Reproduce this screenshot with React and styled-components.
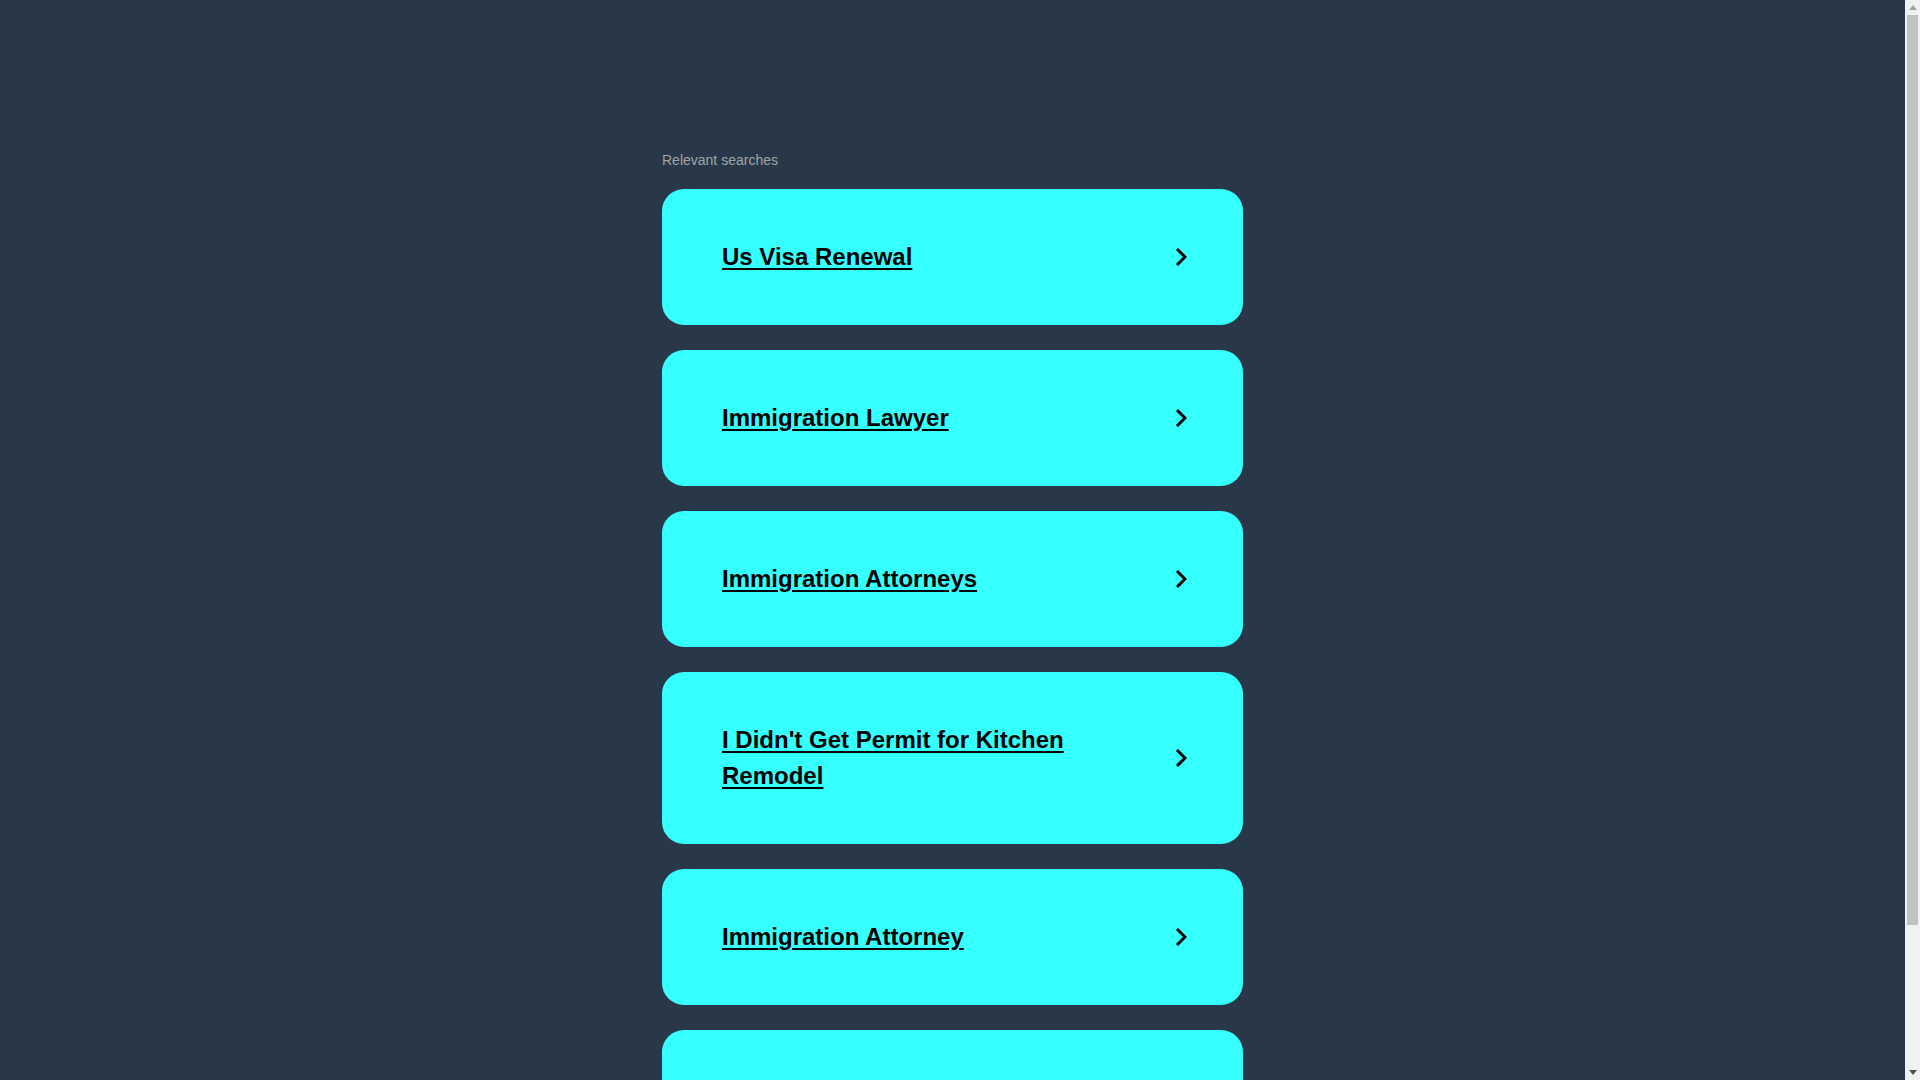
import React from 'react'
import styled, { createGlobalStyle } from 'styled-components'

const GlobalStyle = createGlobalStyle`
    html, body {
        margin: 0;
        padding: 0;
        background: #293848;
    }
    body {
        font-family: "Liberation Sans", Arial, sans-serif;
    }
`;

const Page = styled.div`
    min-height: 100vh;
    background: #293848;
    display: flex;
    justify-content: center;
    padding: 150px 15px 60px 0;
    box-sizing: border-box;
`;

const Column = styled.div`
    width: 581px;
    display: flex;
    flex-direction: column;
`;

const Label = styled.div`
    color: #a0a4a8;
    font-size: 14px;
    line-height: 20px;
    margin-bottom: 19px;
`;

const List = styled.div`
    display: flex;
    flex-direction: column;
    gap: 25px;
`;

const Card = styled.a`
    display: flex;
    align-items: center;
    background: #36ffff;
    border-radius: 22px;
    padding: 50px 56px 50px 60px;
    text-decoration: none;
    cursor: pointer;
`;

const Title = styled.span`
    flex: 1;
    color: #000;
    font-size: 24px;
    font-weight: 700;
    line-height: 36px;
    text-decoration: underline;
    text-underline-offset: 3px;
    margin-right: 40px;
`;

/* stand-in for the browser scrollbar seen in the screenshot */
const ScrollTrack = styled.div`
    position: fixed;
    top: 0;
    right: 0;
    width: 15px;
    height: 100vh;
    background: #f1f1f1;
    display: flex;
    flex-direction: column;
    align-items: center;
    justify-content: space-between;
`;

const ScrollArrow = styled.div`
    width: 15px;
    height: 15px;
    display: flex;
    align-items: center;
    justify-content: center;
`;

const ScrollThumb = styled.div`
    width: 11px;
    flex: 0 0 910px;
    margin-top: 0;
    margin-bottom: auto;
    background: #c1c1c1;
`;

const Triangle = ({ up }) => (
    <svg width="8" height="5" viewBox="0 0 8 5">
        <polygon points={up ? '0,5 8,5 4,0' : '0,0 8,0 4,5'} fill={up ? '#a3a3a3' : '#505050'} />
    </svg>
);

const Chevron = () => (
    <svg width="12" height="20" viewBox="0 0 12 20" fill="none">
        <polyline points="2,2 10,10 2,18" stroke="#000" strokeWidth="3" strokeLinejoin="miter" />
    </svg>
);

const searches = [
    'Us Visa Renewal',
    'Immigration Lawyer',
    'Immigration Attorneys',
    "I Didn't Get Permit for Kitchen Remodel",
    'Immigration Attorney',
    'Immigration Visa',
];

export default function App() {
    return (
        <>
            <GlobalStyle />
            <Page>
                <Column>
                    <Label>Relevant searches</Label>
                    <List>
                        {searches.map((s) => (
                            <Card key={s}>
                                <Title>{s}</Title>
                                <Chevron />
                            </Card>
                        ))}
                    </List>
                </Column>
            </Page>
            <ScrollTrack>
                <ScrollArrow><Triangle up /></ScrollArrow>
                <ScrollThumb />
                <ScrollArrow><Triangle /></ScrollArrow>
            </ScrollTrack>
        </>
    )
}
